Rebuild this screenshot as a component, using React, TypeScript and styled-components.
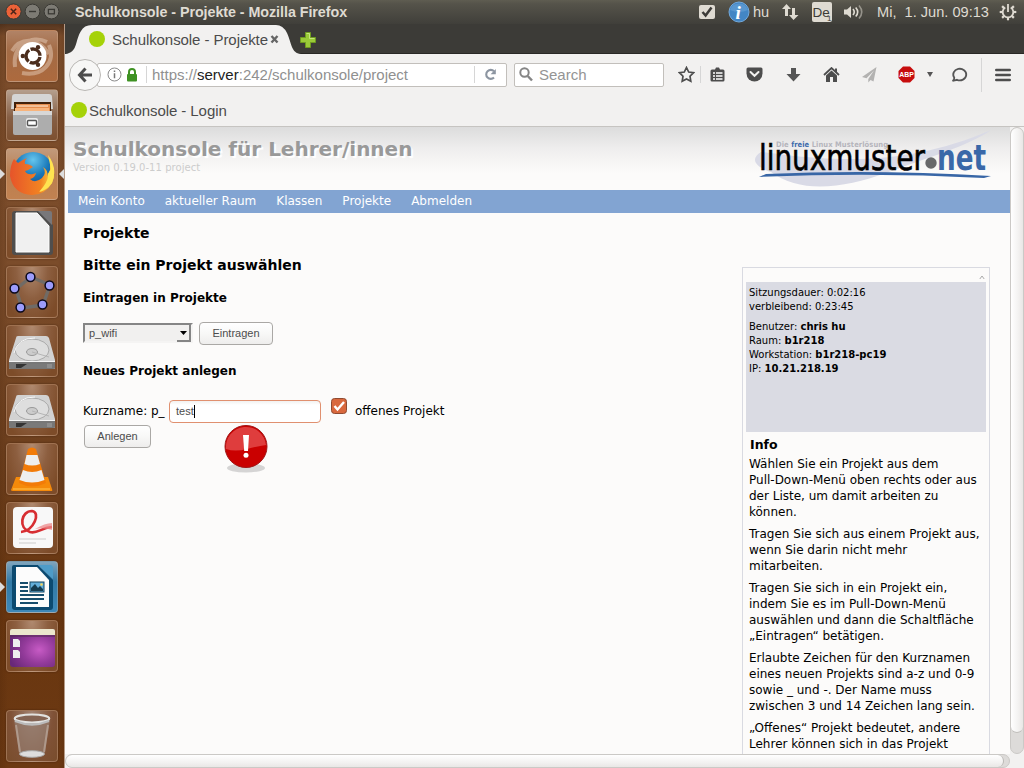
import React from 'react';
import styled, { createGlobalStyle } from 'styled-components';

const Global = createGlobalStyle`
  * { box-sizing: border-box; }
  html, body { margin: 0; padding: 0; overflow: hidden; }
  h1, h2, h3, p { margin: 0; }
`;
const ui = `"Liberation Sans", Arial, sans-serif`;
const web = `"DejaVu Sans", Verdana, sans-serif`;

const Desktop = styled.div`
  width: 1024px; height: 768px; display: flex; flex-direction: column; overflow: hidden;
  font-family: ${ui}; background: #3c3b37; color: #4c4c4c;
`;
const Panel = styled.header`
  height: 24px; flex: none; display: flex; align-items: center; padding-left: 5px;
  background: linear-gradient(#5f5d51 0, #55534a 4px, #403f3a 100%); color: #dfdbd2;
`;
const WindowTitle = styled.div`
  margin-left: 14px; width: 624px; font-size: 14.3px; font-weight: 700; line-height: 24px; white-space: nowrap;
  letter-spacing: -0.05px;
`;
const WinButtons = styled.div`display: flex; gap: 3px; width: 56px; height: 24px; align-items: center;`;
const PanelCell = styled.div<{ $w: number }>`
  width: ${p => p.$w}px; flex: none; height: 24px; display: flex; align-items: center; white-space: nowrap; font-size: 14.6px;
`;
const Body = styled.div`flex: 1; display: flex; min-height: 0;`;
const Launcher = styled.nav`
  width: 65px; flex: none; display: flex; flex-direction: column; gap: 7px; padding: 6px 0 0 6px;
  background: linear-gradient(90deg, rgba(50,20,0,.14), transparent 8px, transparent 58px, rgba(50,20,0,.14)), linear-gradient(#54351f 0, #7c4d2b 12px, #7b4c2a 250px, #6d3f1d 430px, #69360f 590px, #6c3913 100%);
  border-right: 1px solid #b59a86;
`;
const Tile = styled.div<{ $bg?: string; $gapTop?: number }>`
  position: relative; width: 52px; height: 52px; flex: none; border-radius: 4px; margin-top: ${p => p.$gapTop ?? 0}px;
  background: ${p => p.$bg ?? 'radial-gradient(ellipse at 50% 0, #b08a70 0, #8d5f40 45%, #7d4c29 85%)'};
  border: 1px solid rgba(220,180,150,.36); box-shadow: 0 0 2px rgba(40,15,0,.55);
  > svg { display: block; width: 50px; height: 50px; }
`;
const Pip = styled.i<{ $right?: boolean }>`
  position: absolute; top: 20px; width: 0; height: 0; border: 5px solid transparent;
  ${p => p.$right ? 'right: -7px; border-left: 0; border-right-color: #ddd;' : 'left: -7px; border-right: 0; border-left-color: #ddd;'}
`;
const Browser = styled.main`flex: 1; min-width: 0; display: flex; flex-direction: column; background: #f2f1f0;`;
const TabStrip = styled.div`
  height: 30px; flex: none; background: #3c3b37; display: flex; border-bottom: 1px solid #292825;
`;
const Tab = styled.div`
  position: relative; width: 236px; height: 30px; display: flex; align-items: center; padding-left: 24px;
  font-size: 15px; color: #4b4b4b; white-space: nowrap;
  > * { position: relative; }
`;
const TabShape = styled.svg`&& { position: absolute; left: 0; top: 1px; }`;
const TabText = styled.span`margin-left: 7px; width: 158px; letter-spacing: -0.07px; line-height: 22px; padding-top: 1px;`;
const NewTab = styled.svg`margin: 8px 0 0 -1px;`;
const Dot = styled.span`width: 16px; height: 16px; border-radius: 50%; background: #a5d208; flex: none;`;
const Toolbar = styled.div`height: 41px; flex: none; display: flex; align-items: center; padding-left: 4px;`;
const Back = styled.div`
  width: 32px; height: 32px; flex: none; border: 1px solid #b9b7b4; border-radius: 50%; background: #f7f7f6; z-index: 1;
  display: flex; align-items: center; justify-content: center;
`;
const Address = styled.div`
  width: 410px; height: 24px; flex: none; margin-left: -4px; border: 1px solid #c2bfbb; border-radius: 2px; background: #fff;
  display: flex; align-items: center; padding-left: 9px; font-size: 15px; color: #909090; white-space: nowrap;
  b { font-weight: 400; color: #222; }
`;
const Rule = styled.span<{ $h?: number }>`width: 1px; height: ${p => p.$h ?? 17}px; background: #d6d6d6; flex: none;`;
const Url = styled.span`width: 322px; margin-left: 5px; letter-spacing: 0;`;
const Search = styled.div`
  width: 150px; height: 24px; flex: none; margin: 0 8px 0 7px; border: 1px solid #c2bfbb; border-radius: 2px; background: #fff;
  display: flex; align-items: center; gap: 6px; padding-left: 4px; font-size: 15px; color: #949494;
`;
const Cell = styled.div<{ $w: number; $ml?: number }>`
  width: ${p => p.$w}px; margin-left: ${p => p.$ml ?? 0}px; flex: none; display: flex; align-items: center; justify-content: center;
`;
const Bookmarks = styled.div`
  height: 32px; flex: none; border-bottom: 1px solid #c6c4c1; display: flex; align-items: center; gap: 2px;
  padding: 0 0 1px 6px; font-size: 15px; color: #4b4b4b; letter-spacing: -0.08px;
`;
const ViewRow = styled.div`flex: 1; min-height: 0; display: flex;`;
const Page = styled.div`
  width: 945px; flex: none; height: 627px; overflow: hidden; background: #fcfbfa; font-family: ${web}; color: #000; font-size: 12px;
`;
const VBar = styled.div`
  width: 14px; height: 627px; border: 1px solid #cbc9c6; border-radius: 8px; background: #dddbd9; overflow: hidden;
`;
const VThumb = styled.div`
  height: 605px; border-radius: 8px; border-bottom: 1px solid #c1bfbc; background: linear-gradient(90deg, #fff, #f3f2f1 60%, #e9e7e5);
`;
const HBar = styled.div`
  height: 14px; width: 945px; flex: none; border: 1px solid #cbc9c6; border-radius: 8px; background: #dddbd9; overflow: hidden;
`;
const HThumb = styled.div`
  height: 12px; width: 938px; border-radius: 7px; border-right: 1px solid #bbb9b6; background: linear-gradient(#fff, #f3f2f1 60%, #e9e7e5);
`;
const PageHead = styled.div`
  height: 63px; display: flex; justify-content: space-between; padding-left: 8px;
  background: linear-gradient(#dcdcdc 0, #efeeee 22px, #fcfbfa 46px);
`;
const PageTitle = styled.h1`
  font-size: 20px; line-height: 24px; margin-top: 10px; color: #999; letter-spacing: 0; text-shadow: 2px 2px 1px #fff; white-space: nowrap;
`;
const Version = styled.div`font-size: 10px; line-height: 14px; color: #ccc; letter-spacing: 0.05px;`;
const Logo = styled.svg`margin-right: 16px;`;
const Menu = styled.div`
  height: 23px; margin-left: 3px; background: #82a4d2; color: #fff; display: flex; gap: 20px; padding-left: 10px; line-height: 23px; font-size: 12px;
`;
const Columns = styled.div`display: flex;`;
const Content = styled.section`width: 677px; padding: 10px 0 0 18px;`;
const Heading = styled.h2<{ $size: number; $mt: number }>`
  font-size: ${p => p.$size}px; line-height: 20px; margin-top: ${p => p.$mt}px; white-space: nowrap;
`;
const Row = styled.div<{ $mt: number; $ml?: number }>`
  display: flex; align-items: flex-start; margin-top: ${p => p.$mt}px; margin-left: ${p => p.$ml ?? 0}px; height: 23px; line-height: 23px;
`;
const Select = styled.div`
  width: 110px; height: 20px; margin-top: 1px; border: 2px solid; border-color: #858585 #f5f4f3 #f5f4f3 #858585;
  background: #f1f0ef; font: 11px/17px ${ui}; color: #4c4c4c; display: flex; justify-content: space-between; padding-left: 4px;
`;
const Drop = styled.span`
  width: 14px; height: 17px; border: solid #858585; border-width: 0 2px 2px 0; display: flex; align-items: center; justify-content: center;
`;
const Button = styled.div<{ $w: number }>`
  width: ${p => p.$w}px; height: 23px; flex: none; border: 1px solid #aaa8a5; border-radius: 4px; font: 11px/21px ${ui}; color: #4c4c4c; text-align: center;
  background: linear-gradient(#fff, #f8f8f7 50%, #eeedec);
`;
const Label = styled.span<{ $w: number }>`width: ${p => p.$w}px; flex: none; white-space: nowrap; line-height: 22px;`;
const Field = styled.div`
  width: 152px; height: 23px; border: 1px solid #e0906f; border-radius: 4px; padding-left: 6px; font: 11px/21px ${ui}; color: #4c4c4c;
  background: linear-gradient(#f2f1f0, #fff 4px); display: flex; align-items: center;
`;
const Caret = styled.i`width: 1px; height: 13px; background: #000;`;
const Side = styled.aside`
  width: 248px; height: 560px; flex: none; margin-top: 54px; border: 1px solid #d9dae1; padding: 0 3px;
`;
const ToTop = styled.div`height: 14px; display: flex; justify-content: flex-end; padding: 7px 1px 0 0;`;
const Session = styled.div`
  height: 150px; background: #dadbe3; padding: 4px 3px; font-size: 10px; line-height: 14px; white-space: nowrap;
  p + p { margin-top: 6px; }
`;
const InfoTitle = styled.h3`font-size: 12.5px; line-height: 16px; margin: 5px 0 0 4px;`;
const Info = styled.p<{ $first?: boolean }>`
  line-height: 16px; margin: ${p => p.$first ? 3 : 6}px 0 0 3px; white-space: nowrap; font-size: 12px;
`;

const dark = '#4d4d4d';
const g = '#dfdbd2';

const Disk = () => (
  <svg viewBox="0 0 50 50">
    <path d="M9 12Q9 10 11 10H39Q41 10 42 12L48 34V42Q48 43 46 43H4Q2 43 2 42V34Z" fill="#d2d2d2" />
    <path d="M2 36H48V42Q48 43 46 43H4Q2 43 2 42Z" fill="#777" />
    <path d="M9 38H40V42H9Z" fill="#333" /><path d="M20 38H45V42H14Z" fill="#999" opacity=".7" />
    <ellipse cx="25" cy="24" rx="17" ry="11" fill="#dedede" stroke="#aaa" />
    <path d="M7 27Q10 12 28 12" fill="none" stroke="#f7f7f7" />
    <ellipse cx="25" cy="26" rx="5.5" ry="3.5" fill="#ccc" stroke="#999" />
    <path d="M25 26L42 31" stroke="#b5b5b5" /><path d="M2 35.5H48" stroke="#f5f5f5" />
  </svg>
);

const menu = ['Mein Konto', 'aktueller Raum', 'Klassen', 'Projekte', 'Abmelden'];
const info = [
  ['Wählen Sie ein Projekt aus dem', 'Pull-Down-Menü oben rechts oder aus', 'der Liste, um damit arbeiten zu', 'können.'],
  ['Tragen Sie sich aus einem Projekt aus,', 'wenn Sie darin nicht mehr', 'mitarbeiten.'],
  ['Tragen Sie sich in ein Projekt ein,', 'indem Sie es im Pull-Down-Menü', 'auswählen und dann die Schaltfläche', '„Eintragen“ betätigen.'],
  ['Erlaubte Zeichen für den Kurznamen', 'eines neuen Projekts sind a-z und 0-9', 'sowie _ und -. Der Name muss', 'zwischen 3 und 14 Zeichen lang sein.'],
  ['„Offenes“ Projekt bedeutet, andere', 'Lehrer können sich in das Projekt'],
];

export default function App() {
  return (
    <Desktop>
      <Global />
      <Panel>
        <WinButtons>
          <svg width="56" height="18" viewBox="0 0 56 18">
            <circle cx="8.5" cy="8.5" r="7.6" fill="#ec6238" stroke="#3a3934" /><path d="M5.8 5.8L11.2 11.2M11.2 5.8L5.8 11.2" stroke="#4b2418" strokeWidth="1.5" />
            <circle cx="27.5" cy="8.5" r="7.4" fill="#7d7b74" stroke="#3a3934" /><path d="M24 8.5H31" stroke="#3a3934" strokeWidth="1.4" />
            <circle cx="46.5" cy="8.5" r="7.4" fill="#7d7b74" stroke="#3a3934" /><rect x="43.4" y="6.4" width="6" height="4.4" fill="none" stroke="#3a3934" strokeWidth="1.3" />
          </svg>
        </WinButtons>
        <WindowTitle>Schulkonsole - Projekte - Mozilla Firefox</WindowTitle>
        <PanelCell $w={29}><svg width="16" height="16"><rect y="1" width="16" height="14" rx="2" fill={g} /><path d="M3.5 8L6.6 11.5L12.5 3.5" stroke="#3c3b37" strokeWidth="2.5" fill="none" /></svg></PanelCell>
        <PanelCell $w={25}><svg width="22" height="24"><circle cx="11" cy="12" r="10" fill="#4386c4" stroke="#72a9dc" /><path d="M2 10A9.5 9.5 0 0 1 20 10Q11 14 2 10" fill="#6ba5d9" opacity=".55" /><text x="7.5" y="18.5" fontFamily="Liberation Serif" fontSize="19" fontStyle="italic" fontWeight="700" fill="#fff">i</text></svg></PanelCell>
        <PanelCell $w={28}>hu</PanelCell>
        <PanelCell $w={31}><svg width="18" height="18"><path d="M5.5 1L10 6H7V13H4V6H1Z M12.5 17L8 12H11V5H14V12H17.5Z" fill={g} /></svg></PanelCell>
        <PanelCell $w={32}><svg width="20" height="20"><rect width="20" height="20" rx="2" fill={g} /><text x="0.5" y="15" fontFamily="Liberation Sans" fontSize="13.5" fill="#3c3b37">De</text><text x="15" y="18.5" fontFamily="Liberation Sans" fontSize="8" fill="#3c3b37">1</text></svg></PanelCell>
        <PanelCell $w={33}><svg width="20" height="16" fill="none" stroke={g} strokeWidth="1.6"><path d="M0 5.5H3L7 2V14L3 10.5H0Z" fill={g} stroke="none" /><path d="M9 5Q11.5 8 9 11M11.7 3.5Q15.7 8 11.7 12.5" /><path d="M15 1.5Q20.5 8 15 14.5" opacity=".5" /></svg></PanelCell>
        <PanelCell $w={122}><span style={{ whiteSpace: 'pre' }}>Mi,  1. Jun. 09:13</span></PanelCell>
        <svg width="18" height="18" viewBox="-9 -9 18 18" fill="none" stroke={g}><path d="M-2.7 -4.5A5.3 5.3 0 1 0 2.7 -4.5" strokeWidth="1.8" /><path d="M0 -8V0" strokeWidth="1.8" />{[45, 90, 135, 180, 225, 270, 315].map(a => <path key={a} d="M0 -5.5V-8.3" strokeWidth="2.2" transform={`rotate(${a})`} />)}</svg>
      </Panel>
      <Body>
        <Launcher>
          <Tile $bg="linear-gradient(#b18366,#a36b45 40%,#ad6a3e)">
            <svg viewBox="0 0 50 50"><g fill="none" stroke="#e6cbb8" opacity=".5"><path d="M8 36C5 15 24 3 40 11M42 14C49 31 36 46 15 42M5 20C13 7 30 5 42 23" strokeWidth="4" /></g><circle cx="25.5" cy="25" r="14" fill="#fff" /><circle cx="26" cy="25" r="7" fill="none" stroke="#4b2d1d" strokeWidth="3.4" strokeDasharray="13.2 1.45" transform="rotate(8 26 25)" /><g fill="#4b2d1d"><circle cx="15.8" cy="25" r="2.2" /><circle cx="31" cy="16.3" r="2.2" /><circle cx="31" cy="33.8" r="2.2" /></g></svg>
          </Tile>
          <Tile $bg="linear-gradient(#b59f8e,#865f45 55%,#7d5030)">
            <svg viewBox="0 0 50 50"><path d="M5 7Q5 4 8 4H42Q45 4 45 7L46 19H4Z" fill="#d5d5d5" /><path d="M7 12H44V24H7Z" fill="#42210b" /><path d="M9 14H43V24H9Z" fill="#e58d4e" /><path d="M8 18H42V24H8Z" fill="#f8b47c" /><path d="M10 16H41" stroke="#fff1df" /><path d="M6 21H45V43Q45 45 43 45H8Q6 45 6 43Z" fill="#adadad" /><path d="M6 21H45V25H6Z" fill="#d7d7d7" /><rect x="19" y="28" width="12" height="10" rx="2" fill="#e8e8e8" /><rect x="20.5" y="30.5" width="9" height="5" rx="1" fill="#fff" stroke="#555" strokeWidth="1.4" /></svg>
          </Tile>
          <Tile $bg="linear-gradient(#c19a7c,#b97e50 50%,#c28251)"><Pip /><Pip $right />
            <svg viewBox="0 0 50 50"><defs><radialGradient id="globe" cx=".5" cy=".2" r=".8"><stop stopColor="#65c5ed" /><stop offset=".5" stopColor="#1978b9" /><stop offset="1" stopColor="#163a7c" /></radialGradient><linearGradient id="fox" x1="0" y1="0" x2="1" y2="0"><stop stopColor="#e6542a" /><stop offset=".7" stopColor="#f28422" /><stop offset="1" stopColor="#ffe04c" /></linearGradient></defs><circle cx="26" cy="23" r="20" fill="url(#globe)" /><path d="M7 10L11 14Q15 11 20 9Q17 12 18 15Q23 15 26 18Q22 21 18 22Q20 26 26 25L29 24Q28 29 23 30Q28 35 35 29Q40 24 36 18Q42 22 40 27L43 21V12Q50 24 45 34Q38 46 25 46Q6 45 3 27Q3 16 7 10Z" fill="url(#fox)" /><path d="M41 6Q51 19 45 34Q39 42 32 43Q42 32 41 25L44 20Z" fill="#ffe350" /></svg>
          </Tile>
          <Tile><svg viewBox="0 0 50 50"><path d="M5 6Q5 3 8 3H32L46 17V44Q46 47 43 47H8Q5 47 5 44Z" fill="#4f4e4d" /><path d="M9 5H30L42 18V44H9Z" fill="#f0f0f0" stroke="#fff" /><path d="M31 3H43Q45 3 45 5V17Z" fill="#78777a" /></svg></Tile>
          <Tile><svg viewBox="0 0 50 50"><path d="M24 10L43 18L36 38L15 41L9 22Z" fill="none" stroke="#706b66" strokeWidth="3.4" strokeLinejoin="round" />{[[23.5, 10], [42.5, 18.5], [35.5, 37.5], [13.5, 40.5], [7.5, 21.5]].map(([x, y]) => <circle key={x} cx={x} cy={y} r="4.4" fill="#9c9cfb" stroke="#0b091b" strokeWidth="1.5" />)}</svg></Tile>
          <Tile><Disk /></Tile>
          <Tile><Disk /></Tile>
          <Tile><svg viewBox="0 0 50 50"><path d="M9 33L4 46Q4 47 6 47H44Q46 47 45 45L41 33Z" fill="#f58a0a" /><path d="M21 5Q25 2 29 5L39 39Q25 46 12 39Z" fill="#f27b08" /><path d="M19.5 11H30.5L33 20Q25 23 17.5 20ZM16 26Q25 30 34.5 26L37.5 36Q25 41 12.5 36Z" fill="#eee" /><path d="M6 45H43" stroke="#ffc54c" /></svg></Tile>
          <Tile><svg viewBox="0 0 50 50"><rect x="6" y="4" width="40" height="41" rx="4" fill="#f8f8f8" /><path d="M14 29C27 28 34 9 25 8C14 8 11 25 23 29C31 31 33 25 45 24" fill="none" stroke="#d72e32" strokeWidth="2.7" /><path d="M28 26Q38 20 45 20V27Q36 24 28 26" fill="#ee8a8b" opacity=".75" /><path d="M12 36H39M12 40H29" stroke="#ccc" /></svg></Tile>
          <Tile $bg="linear-gradient(#7fa5bd,#327aa6 40%,#3d88b8)"><Pip /><svg viewBox="0 0 50 50"><path d="M5 5Q5 3 7 3H31L46 18V45Q46 48 43 48H8Q5 48 5 45Z" fill="#0c4a70" /><path d="M9 5H30L42 18V45H9Z" fill="#fcfcfc" /><path d="M31 3H43Q46 3 46 6V17Z" fill="#4e9cc8" /><path d="M13 21H21M13 25H21M13 29H21M13 33H37M13 37H37M13 41H31" stroke="#174d6c" strokeWidth="2" /><rect x="23" y="20" width="14" height="10" fill="#63aeda" stroke="#12435f" /><path d="M24 29V26L28 22L31 26L33 24L36 27V29Z" fill="#153b4f" /><circle cx="34.5" cy="22.5" r="1.3" fill="#f5d45b" /></svg></Tile>
          <Tile><svg viewBox="0 0 50 50"><defs><radialGradient id="room" cx=".65" cy=".55" r=".7"><stop stopColor="#c75bc5" /><stop offset=".5" stopColor="#943b9b" /><stop offset="1" stopColor="#682878" /></radialGradient></defs><rect x="3" y="8" width="45" height="38" rx="3" fill="url(#room)" /><path d="M3 10Q3 8 5 8H46Q48 8 48 10V14H3Z" fill="#ebe6cd" /><path d="M3 15H48" stroke="#4e294e" /><path d="M6 18H11L13 20V26H6ZM6 29H11L13 31V37H6Z" fill="#eee" /></svg></Tile>
          <Tile $gapTop={31} $bg="radial-gradient(ellipse at 50% 0,#a18271,#805237 60%,#794d2c)"><svg viewBox="0 0 50 50"><path d="M7 8L12 42Q25 50 38 42L43 8Z" fill="#978174" opacity=".65" /><path d="M9 14L13 41M41 14L37 41" stroke="#c4b4a9" strokeWidth="2" opacity=".6" /><ellipse cx="25" cy="43" rx="12.5" ry="3.3" fill="#ddd" stroke="#aaa" /><ellipse cx="25" cy="7.5" rx="17.2" ry="4" fill="#846454" stroke="#e2e2e0" strokeWidth="2.2" /><path d="M8 10Q25 17 42 10" fill="none" stroke="#bbb" strokeWidth="2.4" /></svg></Tile>
        </Launcher>
        <Browser>
          <TabStrip>
            <Tab>
              <TabShape width="236" height="30"><path d="M0 29C13 28 10 15 16 6Q19 0 27 0H211Q218 0 222 8C227 19 226 28 236 29V30H0Z" fill="#f2f1f0" /></TabShape>
              <Dot /><TabText>Schulkonsole - Projekte</TabText>
              <svg width="9" height="10"><path d="M1.5 2L7.5 8.5M7.5 2L1.5 8.5" stroke="#666" strokeWidth="2.4" /></svg>
            </Tab>
            <NewTab width="16" height="16"><path d="M5.5 .5H10.5V5.5H15.5V10.5H10.5V15.5H5.5V10.5H.5V5.5H5.5Z" fill="#9aca38" stroke="#6f9b20" /><path d="M6.5 1.5H9.5V6.5H14.5" fill="none" stroke="#c5e67c" /></NewTab>
          </TabStrip>
          <Toolbar>
            <Back><svg width="16" height="16"><path d="M8.5 1.5L2.5 8L8.5 14.5M3 8H15" fill="none" stroke={dark} strokeWidth="3" /></svg></Back>
            <Address>
              <svg width="15" height="15"><circle cx="7.5" cy="7.5" r="6.5" fill="none" stroke="#8b8b8b" /><path d="M7.5 6.3V11.3M7.5 3.4V5" stroke="#777" strokeWidth="1.5" /></svg>
              <svg width="22" height="14"><rect x="5" y="6" width="10" height="7.5" rx="1" fill="#3f9223" /><path d="M7 6V4A3 3 0 0 1 13 4V6" fill="none" stroke="#3f9223" strokeWidth="2" /></svg>
              <Cell $w={2} $ml={1}><Rule /></Cell>
              <Url>https://<b>server</b>:242/schulkonsole/project</Url><Rule />
              <Cell $w={31}><svg width="13" height="13"><path d="M10 9.5A4.5 4.5 0 1 1 10 3.3" fill="none" stroke="#8c95a1" strokeWidth="2.1" /><path d="M11.8 1V6.3H6.6Z" fill="#8c95a1" /></svg></Cell>
            </Address>
            <Search><svg width="14" height="15"><circle cx="5.5" cy="5.5" r="4.2" fill="none" stroke="#858585" strokeWidth="2" /><path d="M8.7 9L13 13.5" stroke="#858585" strokeWidth="2.5" /></svg>Search</Search>
            <Cell $w={28}><svg width="17" height="17"><path d="M8.5 1.5L10.7 6L15.5 6.7L12 10.2L12.8 15.2L8.5 12.9L4.2 15.2L5 10.2L1.5 6.7L6.3 6Z" fill="none" stroke={dark} strokeWidth="1.7" /></svg></Cell>
            <Rule />
            <Cell $w={33}><svg width="15" height="15"><path d="M5 2.5L6 .5H9L10 2.5H13Q14.5 2.5 14.5 4V13Q14.5 14.5 13 14.5H2Q.5 14.5 .5 13V4Q.5 2.5 2 2.5Z" fill={dark} /><path d="M3 6H5M6 6H12.5M3 9H5M6 9H12.5M3 12H5M6 12H12.5" stroke="#fff" strokeWidth="1.7" /></svg></Cell>
            <Cell $w={40}><svg width="17" height="15"><path d="M2 .5H15Q16.5 .5 16.5 2V6.5A8 8 0 0 1 .5 6.5V2Q.5 .5 2 .5Z" fill={dark} /><path d="M4.5 5L8.5 8.8L12.5 5" fill="none" stroke="#f2f1f0" strokeWidth="2" strokeLinecap="round" /></svg></Cell>
            <Cell $w={38}><svg width="15" height="15"><path d="M5 1H10V7H14.5L7.5 14.5L.5 7H5Z" fill="#555" /></svg></Cell>
            <Cell $w={38}><svg width="17" height="16"><path d="M1 8L8.5 1L16 8" fill="none" stroke={dark} strokeWidth="1.8" /><path d="M12 1.5H14V6L12 4Z" fill={dark} /><path d="M3 8.5L8.5 3.5L14 8.5V15H10V10H7V15H3Z" fill={dark} /></svg></Cell>
            <Cell $w={38}><svg width="15" height="16"><path d="M14.5 0L0 10L4.5 11.3L12 3.5L6.3 12V15.5L8.5 13L11.5 14.5Z" fill="#b3b2b1" /></svg></Cell>
            <Cell $w={37}><svg width="17" height="17"><path d="M5 .5H12L16.5 5V12L12 16.5H5L.5 12V5Z" fill="#c70d0d" /><text x="1.2" y="11.3" textLength="14.6" lengthAdjust="spacingAndGlyphs" fontFamily="Liberation Sans" fontWeight="700" fontSize="8" fill="#fff">ABP</text></svg></Cell>
            <Cell $w={9}><svg width="6" height="5"><path d="M0 0H6L3 5Z" fill="#555" /></svg></Cell>
            <Cell $w={43} $ml={4}><svg width="17" height="16"><path d="M3.3 10.7A6.5 5.8 0 1 1 6 12.8L1.5 14Q3.4 12.8 3.3 10.7Z" fill="none" stroke="#555" strokeWidth="1.8" /></svg></Cell>
            <Rule $h={34} />
            <Cell $w={42}><svg width="16" height="14"><path d="M1.3 2H14.7M1.3 7H14.7M1.3 12H14.7" stroke={dark} strokeWidth="2.6" strokeLinecap="round" /></svg></Cell>
          </Toolbar>
          <Bookmarks><Dot />Schulkonsole - Login</Bookmarks>
          <ViewRow>
            <Page>
              <PageHead>
                <div><PageTitle>Schulkonsole für Lehrer/innen</PageTitle><Version>Version 0.19.0-11 project</Version></div>
                <Logo width="242" height="63" viewBox="0 0 242 63">
                  <path d="M239 3C188 25 139 33 91 32C43 31 17 25 9 25C-1 31 1 39 19 45C48 67 93 61 134 46C174 31 217 19 239 3Z" fill="#d9dae6" />
                  <text x="24" y="20" fontFamily="DejaVu Sans Condensed, DejaVu Sans" fontWeight="700" fontSize="7.5" fill="#b5b5bc" textLength="112">Die <tspan fill="#3e6cac">freie</tspan> Linux Musterlösung</text>
                  <text x="7" y="43" fontFamily="DejaVu Sans Condensed, DejaVu Sans" fontSize="36" fill="#000" stroke="#000" strokeWidth=".6" textLength="166" lengthAdjust="spacingAndGlyphs">linuxmuster</text>
                  <circle cx="179" cy="36" r="5.7" fill="#68686a" />
                  <text x="185" y="43" fontFamily="DejaVu Sans Condensed, DejaVu Sans" fontSize="35" fontWeight="700" fill="#3a68a8" textLength="49" lengthAdjust="spacingAndGlyphs">net</text>
                  <path d="M7 50L14 47Q122 42 239 49L232 51Q120 45 7 50Z" fill="#3866a6" />
                </Logo>
              </PageHead>
              <Menu>{menu.map(m => <span key={m}>{m}</span>)}</Menu>
              <Columns>
                <Content>
                  <Heading $size={14} $mt={0}>Projekte</Heading>
                  <Heading $size={14} $mt={12}>Bitte ein Projekt auswählen</Heading>
                  <Heading as="h3" $size={12} $mt={13}>Eintragen in Projekte</Heading>
                  <Row $mt={14}><Select>p_wifi<Drop><svg width="7" height="4"><path d="M0 0H7L3.5 4Z" fill="#000" /></svg></Drop></Select><Cell $w={6} /><Button $w={74}>Eintragen</Button></Row>
                  <Heading as="h3" $size={12} $mt={16}>Neues Projekt anlegen</Heading>
                  <Row $mt={19}><Label $w={86}>Kurzname: p_</Label><Field>test<Caret /></Field><Cell $w={10} />
                    <svg width="16" height="16" style={{ marginTop: -2 }}><rect x=".5" y=".5" width="15" height="15" rx="3" fill="#d9683d" stroke="#8f4a30" /><path d="M3.5 8L6.5 11.5L13 4" fill="none" stroke="#fff" strokeWidth="2.4" /></svg>
                    <Cell $w={8} /><Label $w={90}>offenes Projekt</Label></Row>
                  <Row $mt={2} $ml={1}><Button $w={67}>Anlegen</Button><Cell $w={72} />
                    <svg width="46" height="50" viewBox="0 0 46 50"><ellipse cx="23" cy="43" rx="19" ry="4.5" fill="#bbb" opacity=".6" /><circle cx="23" cy="21.5" r="21" fill="#ca0000" stroke="#9f1515" /><path d="M3 24A20 20 0 1 1 43 20Q35 21 24 24Q12 27 3 24Z" fill="#df3d3d" /><path d="M20 10H26L25 26H21.2Z" fill="#fff" /><circle cx="23" cy="30.3" r="2.5" fill="#fff" /></svg></Row>
                </Content>
                <Side>
                  <ToTop><svg width="6" height="5"><path d="M.8 4L3 1L5.2 4" fill="none" stroke="#aaa" /></svg></ToTop>
                  <Session>
                    <p>Sitzungsdauer: 0:02:16<br />verbleibend: 0:23:45</p>
                    <p>Benutzer: <b>chris hu</b><br />Raum: <b>b1r218</b><br />Workstation: <b>b1r218-pc19</b><br />IP: <b>10.21.218.19</b></p>
                  </Session>
                  <InfoTitle>Info</InfoTitle>
                  {info.map((lines, i) => <Info key={i} $first={i === 0}>{lines.map(l => <React.Fragment key={l}>{l}<br /></React.Fragment>)}</Info>)}
                </Side>
              </Columns>
            </Page>
            <VBar><VThumb /></VBar>
          </ViewRow>
          <HBar><HThumb /></HBar>
        </Browser>
      </Body>
    </Desktop>
  );
}
